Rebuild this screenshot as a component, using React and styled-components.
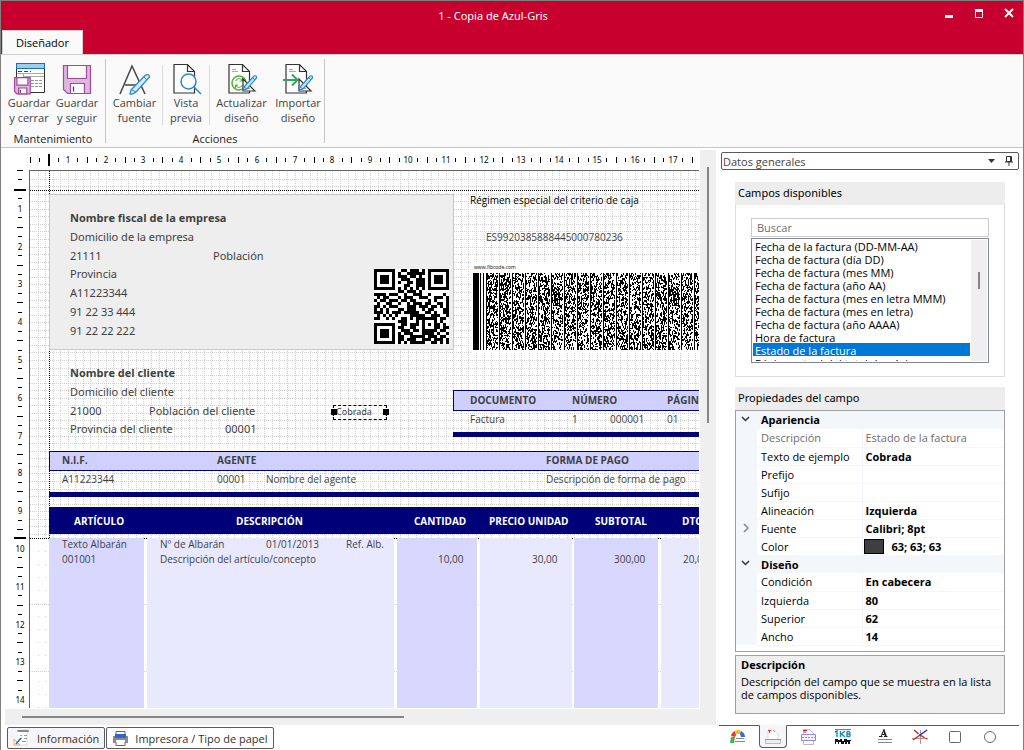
import React, { useLayoutEffect, useRef, useState } from "react";
import styled, { createGlobalStyle, css } from "styled-components";

const GlobalStyle = createGlobalStyle`
  * { box-sizing: border-box; }
  body { margin: 0; background: #fff; }
  body, button, input, select { font-family: "Open Sans", "Noto Sans", sans-serif; font-size: 11px; }
`;

/* ---------- window ---------- */
const Window = styled.div`
  display: flex;
  flex-direction: column;
  height: 100vh;
  min-height: 720px;
  border: 1px solid #808080;
  border-bottom: 0;
  color: #000;
`;
const Header = styled.header`
  display: flex;
  flex-direction: column;
  justify-content: space-between;
  height: 53px;
  flex: none;
  background: #c8002d;
`;
const TitleBar = styled.div`
  display: grid;
  grid-template-columns: 82px 1fr 82px;
  align-items: center;
  height: 29px;
`;
const Title = styled.h1`
  grid-column: 2;
  margin: 0;
  padding-right: 38px;
  text-align: center;
  font-family: "Noto Sans", sans-serif;
  font-size: 11px;
  font-weight: 400;
  color: #fff;
`;
const WindowButtons = styled.div`
  display: flex;
  justify-content: space-between;
  padding-right: 8px;
  padding-bottom: 6px;
`;
const WindowButton = styled.button`
  width: 14px;
  height: 14px;
  padding: 0;
  border: 0;
  background: none;
  color: #fff;
  svg { display: block; }
`;
const RibbonTab = styled.button`
  align-self: flex-start;
  width: 81px;
  height: 24px;
  margin-left: 1px;
  padding: 0;
  border: 1px solid #d0d0d0;
  border-bottom: 0;
  background: #fafafa;
  color: #000;
`;

/* ---------- ribbon ---------- */
const Ribbon = styled.div`
  display: flex;
  flex: none;
  height: 94px;
  background: #fafafa;
  border-top: 1px solid #d0d0d0;
  border-bottom: 1px solid #c6c6c6;
`;
const RibbonGroup = styled.section`
  display: flex;
  flex-direction: column;
  justify-content: space-between;
  margin: 4px 0 4px;
  padding: 0 ${(p) => p.$pad}px;
  border-right: 1px solid #c6c6c6;
`;
const RibbonRow = styled.div`
  display: flex;
`;
const GroupName = styled.div`
  text-align: center;
  line-height: 16px;
  margin-bottom: -4px;
  color: #222;
`;
const RibbonButton = styled.button`
  display: flex;
  flex-direction: column;
  align-items: center;
  width: ${(p) => p.$w}px;
  padding: 4px 0 0;
  border: 0;
  background: none;
  color: #444;
  line-height: 15px;
  white-space: pre-line;
  svg { display: block; flex: none; }
`;
const RibbonRule = styled.span`
  width: 1px;
  margin: 6px 0 0;
  height: 60px;
  background: #dcdcdc;
`;

/* ---------- body ---------- */
const Body = styled.main`
  display: flex;
  flex: 1;
  min-height: 0;
`;
const Designer = styled.section`
  display: flex;
  flex-direction: column;
  flex: 1;
  min-width: 0;
  padding-bottom: 1px;
`;
const Workspace = styled.div`
  display: grid;
  grid-template-columns: 28px minmax(0, 1fr) 17px;
  grid-template-rows: 22px minmax(0, 1fr);
  flex: 1;
  min-height: 0;
`;
const Ruler = styled.div`
  overflow: hidden;
  grid-area: ${(p) => (p.$vertical ? "2 / 1" : "1 / 2")};
  svg { display: block; }
  text { font-size: 8px; font-family: "Noto Sans", sans-serif; fill: #000; text-anchor: middle; }
`;
const Page = styled.div`
  grid-area: 2 / 2;
  position: relative;
  overflow: hidden;
  border-left: 1px solid #646464;
  border-top: 1px solid #646464;
`;
const PageGrid = styled.svg`
  position: absolute;
  left: 0;
  top: 0;
`;
const Track = styled.div`
  background: #efefef;
  ${(p) =>
    p.$vertical
      ? css`grid-area: 1 / 3 / 3 / 4; margin: 2px 0 -1px 1px; padding: 17px 7px 0;`
      : css`flex: none; height: 16px; margin: 1px 0 0 4px; padding: 7px 17px 0;`}
`;
const Thumb = styled.div`
  background: #868686;
  ${(p) => (p.$vertical ? css`width: 2px; height: ${p.$size};` : css`height: 2px; width: ${p.$size};`)}
`;
const BottomTabs = styled.nav`
  display: flex;
  flex: none;
  gap: 1px;
  margin: 2px 0 0 6px;
`;
const BottomTab = styled.button`
  display: flex;
  align-items: center;
  gap: 6px;
  height: 22px;
  padding: 0 5px;
  border: 1px solid #5a5a5f;
  border-radius: 2px;
  background: ${(p) => (p.$soft ? "#f5f5fa" : "#fff")};
  color: #333;
  white-space: nowrap;
`;

/* ---------- page items ---------- */
const Shape = styled.div`
  position: absolute;
  left: ${(p) => p.$x}px;
  top: ${(p) => p.$y}px;
  width: ${(p) => p.$w}px;
  height: ${(p) => p.$h}px;
  background: ${(p) => p.$fill};
  border: ${(p) => (p.$line ? `1px solid ${p.$line}` : "0")};
`;
const Field = styled.div`
  position: absolute;
  left: ${(p) => p.$x}px;
  top: ${(p) => p.$y}px;
  line-height: 16px;
  white-space: nowrap;
  font-family: ${(p) => (p.$noto ? `"Noto Sans"` : `"Open Sans"`)}, sans-serif;
  font-size: ${(p) => p.$size || 10}px;
  font-weight: ${(p) => (p.$bold ? 700 : 400)};
  color: ${(p) => p.$color || "#3f3f3f"};
`;
const Selected = styled.div`
  position: absolute;
  left: 303px;
  top: 234px;
  width: 54px;
  height: 15px;
  padding-left: 2px;
  border: 1px dashed #000;
  line-height: 12px;
  font-family: "Noto Sans", sans-serif;
  font-size: 9px;
  color: #3f3f3f;
`;
const Handle = styled.span`
  position: absolute;
  top: 3px;
  ${(p) => p.$side}: -3px;
  width: 6px;
  height: 6px;
  background: #000;
`;

/* ---------- side panel ---------- */
const Side = styled.aside`
  display: flex;
  flex-direction: column;
  flex: none;
  width: 307px;
  padding: 4px 4px 0 5px;
`;
const Combo = styled.div`
  display: flex;
  align-items: center;
  height: 18px;
  padding-right: 2px;
  border: 1px solid #5a5a5f;
  border-radius: 2px;
`;
const ComboSelect = styled.select`
  flex: 1;
  min-width: 0;
  height: 16px;
  padding: 0 1px;
  border: 0;
  appearance: none;
  background: none;
  color: #444;
`;
const ComboArrow = styled.svg`
  pointer-events: none;
  margin-right: 6px;
`;
const PinButton = styled.button`
  width: 14px;
  height: 14px;
  padding: 0;
  border: 0;
  background: none;
  svg { display: block; }
`;
const Group = styled.section`
  margin: ${(p) => p.$top}px 14px 0;
`;
const GroupTitle = styled.h2`
  margin: 0;
  height: 23px;
  padding-left: 3px;
  line-height: 22px;
  background: #ededed;
  font-family: "Noto Sans", sans-serif;
  font-size: 11px;
  font-weight: 400;
`;
const GroupBody = styled.div`
  border: 1px solid #dcdcdc;
  border-top: 0;
  padding: 13px 15px;
`;
const Search = styled.input`
  display: block;
  width: 100%;
  height: 19px;
  padding: 0 5px 1px;
  border: 1px solid #ccc;
  border-radius: 0;
  outline: 0;
  &::placeholder { color: #6d6d6d; }
`;
const ListFrame = styled.div`
  display: flex;
  height: 125px;
  margin-top: 1px;
  padding: 0 1px 1px;
  border: 1px solid #828790;
`;
const List = styled.select`
  flex: 1;
  min-width: 0;
  height: 122px;
  padding: 0;
  border: 0;
  outline: 0;
  overflow: hidden;
  scrollbar-width: none;
  background: #fff;
  color: #000;
  option {
    height: 13px;
    min-height: 13px;
    padding: 0 2px;
    line-height: 13px;
    border: 0;
  }
  option:checked {
    background: linear-gradient(#0078d7, #0078d7);
    -webkit-text-fill-color: #fff;
  }
`;
const ListTrack = styled.div`
  width: 16px;
  margin: 1px 0 0 1px;
  padding: 32px 7px 0;
  background: #efefef;
`;
const Properties = styled.div`
  height: 242px;
  border: 1px solid #a0a0a0;
`;
const PropTable = styled.table`
  width: 100%;
  border-collapse: collapse;
  table-layout: fixed;
  col.gutter { width: 21px; }
  col.name { width: 105px; }
  td, th { height: 18px; padding: 0; line-height: 15px; text-align: left; white-space: nowrap; vertical-align: top; }
`;
const Gutter = styled.td`
  background: #f3f6fb;
  svg { display: block; margin: 4px 0 0 4px; }
`;
const Category = styled.th`
  padding: 1px 0 0 4px !important;
  background: #f3f6fb;
  font-weight: 700;
`;
const PropName = styled.th`
  padding: 1px 0 0 4px !important;
  border-bottom: 1px solid #f3f6fb;
  font-weight: 400;
  color: ${(p) => (p.$muted ? "#6d6d6d" : "#000")};
`;
const PropValue = styled.td`
  padding: 1px 0 0 3px !important;
  border-bottom: 1px solid #f3f6fb;
  border-left: 1px solid #f3f6fb;
  font-weight: ${(p) => (p.$muted ? 400 : 700)};
  color: ${(p) => (p.$muted ? "#6d6d6d" : "#000")};
`;
const Swatch = styled.span`
  display: inline-block;
  width: 20px;
  height: 15px;
  margin: 0 8px 0 -2px;
  vertical-align: top;
  border: 1px solid #000;
  background: #3f3f3f;
`;
const Help = styled.div`
  height: 59px;
  margin: 3px 14px 0;
  padding: 2px 5px;
  border: 1px solid #a0a0a0;
  background: #efefef;
  line-height: 13px;
`;
const HelpTitle = styled.h3`
  margin: 0 0 4px;
  font-size: 11px;
  font-weight: 700;
`;
const ToolTabs = styled.nav`
  display: flex;
  margin: 11px 0 0 -2px;
  padding-left: 5px;
  border-top: 1px solid #5a5a5f;
`;
const ToolTab = styled.button`
  display: flex;
  align-items: center;
  justify-content: center;
  width: 28px;
  height: 23px;
  margin: -1px 7px 0 0;
  padding: 0;
  border: 1px solid ${(p) => (p.$active ? "#5a5a5f" : "transparent")};
  border-top-color: ${(p) => (p.$active ? "#f5f5fa" : "transparent")};
  border-radius: 0 0 4px 4px;
  background: ${(p) => (p.$active ? "#f5f5fa" : "none")};
  &:nth-child(4) { margin-right: 14px; }
`;

/* ---------- icons ---------- */
const Floppy = ({ x = 0, y = 0, s = 1 }) => (
  <g transform={`translate(${x} ${y}) scale(${s})`} stroke="#a04a9e" strokeWidth={1.2 / s}>
    <path d="M1 1H28V29H5L1 25Z" fill="#dcb8dc" />
    <path d="M5 1H24V14H5Z" fill="#fafafa" />
    <path d="M8 19H22V29H8Z" fill="#fafafa" />
    <path d="M11 22V27" stroke="#444" />
  </g>
);
const Pencil = ({ x, y }) => (
  <g transform={`translate(${x} ${y})`}>
    <path d="M2 12L12 1Q15 0 14.500 3L5 14L1 15Z" fill="#cfe6f7" stroke="#2e88cb" strokeWidth="1.200" />
    <path d="M2 12L5 14M11 3L13 5" stroke="#2e88cb" fill="none" />
  </g>
);
const Sheet = ({ x }) => (
  <path d={`M${x} 1.500H${x + 13.5}L${x + 20.5} 8.500V30H${x}ZM${x + 13.5} 1.500V8.500H${x + 20.5}`} fill="#fff" stroke="#333" strokeWidth="1.200" />
);
const SetSquare = () => <path d="M17 16V28H29ZM20 23V25H22.500Z" fill="#fff" stroke="#333" strokeWidth="1.200" />;
const Icon = ({ w = 32, h = 32, children }) => (
  <svg width={w} height={h} viewBox={`0 0 ${w} ${h}`} fill="none" aria-hidden="true">
    {children}
  </svg>
);

const SaveCloseIcon = () => (
  <Icon>
    <path d="M3.500 0.500H31.500V29.500H3.500Z" fill="#fff" stroke="#333" />
    <path d="M3.500 0.500H31.500V5.500H3.500Z" fill="#9ccdf0" stroke="#1c6fb5" />
    <path d="M5 8.500H18" stroke="#444" strokeDasharray="4 2" />
    <path d="M4 10.500H31M10.500 11V16M10 13.500H31" stroke="#a8a8a8" />
    <path d="M18 17.500H29M18 20.500H29M18 23.500H29" stroke="#999" strokeDasharray="3 1" />
    <Floppy x={1} y={14} s={0.58} />
  </Icon>
);
const SaveIcon = () => (
  <Icon>
    <Floppy x={1.500} y={1.500} />
  </Icon>
);
const FontIcon = () => (
  <Icon>
    <path d="M1 31L13 3L26 31M6 22H20" stroke="#444" strokeWidth="1.500" />
    <path d="M12 27L26 12.500Q30 10 30.500 14L17 29Q13 32 11 31Z" fill="#d6eaf8" stroke="#2e88cb" strokeWidth="1.300" />
    <path d="M13 27L17 29M25 14L28 17" stroke="#2e88cb" />
  </Icon>
);
const PreviewIcon = () => (
  <Icon>
    <Sheet x={4} />
    <circle cx="18.500" cy="18.500" r="7.500" fill="#fff" stroke="#2e88cb" strokeWidth="1.500" />
    <path d="M24 24L31 31" stroke="#2e88cb" strokeWidth="1.500" />
  </Icon>
);
const UpdateIcon = () => (
  <Icon>
    <Sheet x={3} />
    <path d="M6 6.500H10M6 8.500H12" stroke="#aaa" />
    <circle cx="13" cy="20" r="7" fill="#fff" stroke="#56b33c" strokeWidth="1.600" />
    <path d="M9.500 18Q13 13 16.500 18M16.500 15V18H13.500M16.500 22Q13 27 9.500 22M9.500 25V22H12" stroke="#56b33c" strokeWidth="1.200" />
    <SetSquare />
    <Pencil x={16} y={12} />
  </Icon>
);
const ImportIcon = () => (
  <Icon>
    <Sheet x={4} />
    <path d="M7 6.500H11M7 8.500H14" stroke="#aaa" />
    <path d="M1 17H15M10 11.500L15.500 17L10 22.500" stroke="#2fa560" strokeWidth="2" />
    <SetSquare />
    <Pencil x={16} y={12} />
  </Icon>
);
const InfoIcon = () => (
  <Icon w={18} h={18}>
    <path d="M5 3Q4 1 6 1H16V3Q14 2 14 5V16H4" fill="#fff" stroke="#ddd" />
    <path d="M4 1H15Q17 2 15 3H5Z" fill="#8a8a8a" />
    <path d="M7 6.500H9M11 6.500H14M7 9.500H9M11 9.500H14M9 12.500H13" stroke="#999" />
    <path d="M1 10V16H7Z" fill="#fff" stroke="#e8b04a" />
    <path d="M3 15L8 9" stroke="#2b6ca8" strokeWidth="1.500" />
  </Icon>
);
const PrinterIcon = () => (
  <Icon w={17} h={17}>
    <path d="M4 4V1.500H13V4M4 12V15.500H13V12" stroke="#666" fill="#fff" />
    <path d="M1 6H16V13H13V10H4V13H1Z" fill="#8a8a8a" />
    <path d="M3 4H14V8H3Z" fill="#2f66d0" />
  </Icon>
);
const DataIcon = () => (
  <Icon w={18} h={18}>
    <path d="M1 15L2 9H6L5 15Z" fill="#3db54a" />
    <path d="M2 8Q3 4 6 3L7 7L6 9Z" fill="#e53a2a" />
    <path d="M6 3Q9 1 12 3L11 6H7Z" fill="#f7b82a" />
    <path d="M12 3Q16 5 16 9H12L11 6Z" fill="#2f6fd0" />
    <path d="M7 10.500H15M6 13.500H16" stroke="#888" />
  </Icon>
);
const DocIcon = () => (
  <Icon w={18} h={18}>
    <path d="M4 11V2H10L14 6V11" fill="#fff" stroke="#ddd" />
    <path d="M4 2.500H7M5.500 3V5" stroke="#d33" />
    <path d="M9 2L11 4" stroke="#7ac" />
    <path d="M1.500 11.500H16.500V15.500H1.500Z" fill="#eee" stroke="#bbb" />
    <path d="M1 11.500H17" stroke="#5aa7dc" />
  </Icon>
);
const LinesIcon = () => (
  <Icon w={18} h={18}>
    <path d="M4.500 6V1.500H10L14.500 5V6M4.500 12V16.500H14.500V12" fill="#fff" stroke="#bbb" />
    <path d="M4 2.500H8M6 3V5" stroke="#c22" />
    <path d="M2.500 6.500H16.500V12.500H2.500Z" fill="#f4f2ff" stroke="#8f86f0" />
    <path d="M3 9.500H16" stroke="#8f86f0" strokeDasharray="2 1" />
  </Icon>
);
const CodeIcon = () => (
  <Icon w={18} h={18}>
    <path d="M1 1.500H17" stroke="#19a3c8" />
    <path d="M1 4L3 3V9M6.500 3V9M11 3L7.500 6L11 9M13 3.500V8.500H15.500Q17 7 15 6H13M13 3.500H15Q17 5 15 6" stroke="#1290b8" strokeWidth="1.400" />
    <path d="M1 11H4V12H6V11H8V13H10V11H13V12H17V13H16V16H14V14H13V16H11V14H10V16H7V14H5V16H4V14H2V16H1Z" fill="#111" />
  </Icon>
);
const TextIcon = () => (
  <Icon w={18} h={18}>
    <path d="M5 8.500L8 1.500M6 6.500H9.500M3 8.500H6.500M8 8.500H11.500" stroke="#222" />
    <path d="M7.500 1.500L10 8.500" stroke="#222" strokeWidth="1.800" />
    <path d="M2 11.500H16M2 14.500H16" stroke="#888" />
  </Icon>
);
const LineIcon = () => (
  <Icon w={18} h={18}>
    <path d="M1 10.500H17M9.500 2V16" stroke="#999" />
    <path d="M3 2L9 7L16 11" stroke="#d22" strokeWidth="1.400" strokeDasharray="6 1" />
    <path d="M16 2L9 7" stroke="#22c" strokeWidth="1.400" />
    <path d="M9 7L2 12" stroke="#d22" strokeWidth="1.400" />
  </Icon>
);
const RectIcon = () => (
  <Icon w={18} h={18}>
    <rect x="3.500" y="3.500" width="11" height="11" rx="1" stroke="#666" />
  </Icon>
);
const CircleIcon = () => (
  <Icon w={18} h={18}>
    <circle cx="9" cy="9" r="5.500" stroke="#666" />
  </Icon>
);

/* ---------- rulers, grid, codes ---------- */
const CM = 37.8;
const cm = (n) => Math.round(CM * n);

function RulerScale({ vertical, margins }) {
  const box = useRef(null);
  const [length, setLength] = useState(0);
  useLayoutEffect(() => {
    const el = box.current;
    const read = () => setLength(vertical ? el.clientHeight : el.clientWidth);
    read();
    const watch = new ResizeObserver(read);
    watch.observe(el);
    return () => watch.disconnect();
  }, [vertical]);

  const center = vertical ? 19 : 12;
  const marks = [];
  const bar = (key, at, len, thick) =>
    vertical ? (
      <rect key={key} x={center - len / 2} y={at} width={len} height={thick} />
    ) : (
      <rect key={key} x={at} y={center - len / 2} width={thick} height={len} />
    );
  for (let q = 0; cm(q / 4) < length - 5; q++) {
    const at = cm(q / 4) + (vertical ? 0 : 1);
    if (q % 4 === 0 && q > 0) {
      marks.push(
        <text key={q} x={vertical ? 19 : at} y={vertical ? at + 4 : 15}>
          {q / 4}
        </text>
      );
    } else if (!margins.some((m) => Math.abs(m - at) < 3)) {
      marks.push(bar(q, at, q % 2 ? 4 : 6, 1));
    }
  }
  margins.forEach((m) => m < length && marks.push(bar(`m${m}`, m - 1, 12, 2)));
  return (
    <Ruler ref={box} $vertical={vertical}>
      <svg width={vertical ? 28 : length} height={vertical ? length : 22} shapeRendering="crispEdges">
        {marks}
      </svg>
    </Ruler>
  );
}

const DETAIL_TOP = 367;
function GridLines() {
  const lines = [];
  for (let k = 1; k < 250; k++) {
    const p = Math.round(k * 7.56) + 0.5;
    lines.push(<path key={`v${k}`} d={`M${p} 0V${DETAIL_TOP}`} strokeDasharray="1 1" />);
    lines.push(<path key={`d${k}`} d={`M${p} ${DETAIL_TOP}V1500`} strokeDasharray="1 12" />);
    if (p < DETAIL_TOP) lines.push(<path key={`h${k}`} d={`M0 ${p}H1900`} strokeDasharray="1 1" />);
  }
  for (let y = 433; y < 1500; y += 67) lines.push(<path key={`r${y}`} d={`M0 ${y + 0.5}H1900`} strokeDasharray="1 1" />);
  return (
    <PageGrid width="1900" height="1500" fill="none" stroke="#d2d2d2" shapeRendering="crispEdges">
      {lines}
      <g stroke="#000" strokeDasharray="1 1">
        <path d="M19.500 0V368M0 19.500H1900M0 367.500H1900" />
      </g>
    </PageGrid>
  );
}

const QR = [
  "1111111001101110101111111",
  "1000001010011111101000001",
  "1011101011101101001011101",
  "1011101001110011101011101",
  "1011101010011011101011101",
  "1000001000110011101000001",
  "1111111010101010101111111",
  "0000000011011101000000000",
  "1111011100100111001000010",
  "0101100010111001110011101",
  "1011011101101100001010001",
  "0100110010010111011001101",
  "1101011100011101110110101",
  "1010100011011100101100011",
  "1110101110111110011010011",
  "0101010100001111100111001",
  "1100101001101011111110110",
  "0000000011100010100010100",
  "1111111001101110101011010",
  "1000001011001100100011011",
  "1011101001110110111110110",
  "1011101010111000111101001",
  "1011101011001111101110110",
  "1000001011011100111011101",
  "1111111010101111100110101",
];
function QrCode() {
  const d = QR.map((row, y) => [...row].map((c, x) => (c === "1" ? `M${x * 3} ${y * 3}h3v3h-3z` : "")).join("")).join("");
  return (
    <svg width="75" height="75" shapeRendering="crispEdges" role="img" aria-label="QR">
      <path d="M0 0H75V75H0Z" fill="#fff" />
      <path d={d} fill="#000" />
    </svg>
  );
}
function StackedCode() {
  let seed = 7;
  const rnd = () => (seed = (seed * 1103515245 + 12345) % 2147483648) / 2147483648;
  let d = "M2 11h6v77h-6zM9 11h1v77h-1zM12 11h1v77h-1z";
  for (let x = 15; x < 400; x++) {
    if ((x - 15) % 13 === 0) {
      d += `M${x} 11h1v77h-1z`;
      continue;
    }
    if ((x - 15) % 13 === 12) continue;
    let y = 11;
    while (y < 88) {
      const on = rnd() > 0.5;
      const h = Math.min(rnd() > 0.5 ? 2 : 1, 88 - y);
      if (on) d += `M${x} ${y}h1v${h}h-1z`;
      y += h;
    }
  }
  return (
    <svg width="400" height="91" shapeRendering="crispEdges" role="img" aria-label="Código">
      <path d="M0 0H400V91H0Z" fill="#fff" />
      <path d={d} fill="#000" />
    </svg>
  );
}

const NAVY = "#000078";
const LILAC = "#d0d0ff";
const SHAPES = [
  [19, 23, 405, 156, "#eee", "#c8c8c8"],
  [423, 219, 340, 21, LILAC, NAVY],
  [423, 261, 340, 5, NAVY],
  [19, 280, 744, 20, LILAC, NAVY],
  [19, 321, 744, 5, NAVY],
  [19, 336, 744, 27, NAVY],
  [19, 367, 95, 800, "#d8d8ff"],
  [117, 367, 247, 800, "#e8e8ff"],
  [367, 367, 80, 800, "#d8d8ff"],
  [450, 367, 92, 800, "#e8e8ff"],
  [544, 367, 84, 800, "#d8d8ff"],
  [631, 367, 84, 800, "#e8e8ff"],
];
const big = { $size: 11, $noto: true };
const bigBold = { $size: 11, $bold: true };
const bold = { $bold: true };
const head = { $bold: true, $color: "#fff" };
const FIELDS = [
  ["Nombre fiscal de la empresa", 40, 39, bigBold],
  ["Domicilio de la empresa", 40, 58, big],
  ["21111", 40, 77, big],
  ["Población", 183, 77, big],
  ["Provincia", 40, 95, big],
  ["A11223344", 40, 114, big],
  ["91 22 33 444", 40, 133, big],
  ["91 22 22 222", 40, 152, big],
  ["Régimen especial del criterio de caja", 440, 21, { $color: "#000" }],
  ["ES9920385888445000780236", 456, 58, {}],
  ["Nombre del cliente", 40, 194, bigBold],
  ["Domicilio del cliente", 40, 213, big],
  ["21000", 40, 232, big],
  ["Población del cliente", 119, 232, big],
  ["Provincia del cliente", 40, 250, big],
  ["00001", 195, 250, big],
  ["DOCUMENTO", 440, 221, bold],
  ["NÚMERO", 542, 221, bold],
  ["PÁGINA", 637, 221, bold],
  ["Factura", 440, 240, {}],
  ["1", 542, 240, {}],
  ["000001", 580, 240, {}],
  ["01", 637, 240, {}],
  ["N.I.F.", 32, 281, bold],
  ["AGENTE", 187, 281, bold],
  ["FORMA DE PAGO", 516, 281, bold],
  ["A11223344", 32, 300, {}],
  ["00001", 187, 300, {}],
  ["Nombre del agente", 236, 300, {}],
  ["Descripción de forma de pago", 516, 300, {}],
  ["ARTÍCULO", 44, 342, head],
  ["DESCRIPCIÓN", 206, 342, head],
  ["CANTIDAD", 384, 342, head],
  ["PRECIO UNIDAD", 459, 342, head],
  ["SUBTOTAL", 565, 342, head],
  ["DTO.", 652, 342, head],
  ["Texto Albarán", 32, 365, {}],
  ["Nº de Albarán", 130, 365, {}],
  ["01/01/2013", 236, 365, {}],
  ["Ref. Alb.", 316, 365, {}],
  ["001001", 32, 380, {}],
  ["Descripción del artículo/concepto", 130, 380, {}],
  ["10,00", 408, 380, {}],
  ["30,00", 502, 380, {}],
  ["300,00", 584, 380, {}],
  ["20,00", 653, 380, {}],
];

const OPTIONS = [
  "Fecha de la factura (DD-MM-AA)",
  "Fecha de factura (día DD)",
  "Fecha de factura (mes MM)",
  "Fecha de factura (año AA)",
  "Fecha de factura (mes en letra MMM)",
  "Fecha de factura (mes en letra)",
  "Fecha de factura (año AAAA)",
  "Hora de factura",
  "Estado de la factura",
  "Página actual del total de páginas",
];
const PROPS = [
  { cat: "Apariencia" },
  { name: "Descripción", value: "Estado de la factura", muted: true },
  { name: "Texto de ejemplo", value: "Cobrada" },
  { name: "Prefijo", value: "" },
  { name: "Sufijo", value: "" },
  { name: "Alineación", value: "Izquierda" },
  { name: "Fuente", value: "Calibri; 8pt", expand: true },
  { name: "Color", value: "63; 63; 63", swatch: true },
  { cat: "Diseño" },
  { name: "Condición", value: "En cabecera" },
  { name: "Izquierda", value: "80" },
  { name: "Superior", value: "62" },
  { name: "Ancho", value: "14" },
];
const TOOLS = [
  ["Datos", DataIcon],
  ["Documento", DocIcon],
  ["Líneas", LinesIcon],
  ["Códigos", CodeIcon],
  ["Texto", TextIcon],
  ["Línea", LineIcon],
  ["Rectángulo", RectIcon],
  ["Elipse", CircleIcon],
];

function RibbonItem({ icon: I, label, w }) {
  return (
    <RibbonButton type="button" $w={w}>
      <I />
      {label}
    </RibbonButton>
  );
}

export default function App() {
  return (
    <Window>
      <GlobalStyle />
      <Header>
        <TitleBar>
          <Title>1 - Copia de Azul-Gris</Title>
          <WindowButtons>
            <WindowButton type="button" aria-label="Minimizar">
              <Icon w={14} h={14}><path d="M4 9H12V12H4Z" fill="#fff" /></Icon>
            </WindowButton>
            <WindowButton type="button" aria-label="Maximizar">
              <Icon w={14} h={14}><path d="M4.500 4V11.500H11.500V4" stroke="#fff" /><path d="M4 3H12V6H4Z" fill="#fff" /></Icon>
            </WindowButton>
            <WindowButton type="button" aria-label="Cerrar">
              <Icon w={14} h={14}><path d="M4 3L12 11M12 3L4 11" stroke="#fff" strokeWidth="2" /></Icon>
            </WindowButton>
          </WindowButtons>
        </TitleBar>
        <RibbonTab type="button">Diseñador</RibbonTab>
      </Header>
      <Ribbon>
        <RibbonGroup $pad={4}>
          <RibbonRow>
            <RibbonItem icon={SaveCloseIcon} label={"Guardar\ny cerrar"} w={48} />
            <RibbonItem icon={SaveIcon} label={"Guardar\ny seguir"} w={48} />
          </RibbonRow>
          <GroupName>Mantenimiento</GroupName>
        </RibbonGroup>
        <RibbonGroup $pad={1}>
          <RibbonRow>
            <RibbonItem icon={FontIcon} label={"Cambiar\nfuente"} w={55} />
            <RibbonRule />
            <RibbonItem icon={PreviewIcon} label={"Vista\nprevia"} w={46} />
            <RibbonRule />
            <RibbonItem icon={UpdateIcon} label={"Actualizar\ndiseño"} w={63} />
            <RibbonItem icon={ImportIcon} label={"Importar\ndiseño"} w={50} />
          </RibbonRow>
          <GroupName>Acciones</GroupName>
        </RibbonGroup>
      </Ribbon>
      <Body>
        <Designer>
          <Workspace>
            <RulerScale margins={[20]} />
            <RulerScale vertical margins={[20, 368]} />
            <Page>
              <GridLines />
              {SHAPES.map(([x, y, w, h, fill, line], i) => (
                <Shape key={i} $x={x} $y={y} $w={w} $h={h} $fill={fill} $line={line} />
              ))}
              <Shape $x={344} $y={98} $w={75} $h={75}><QrCode /></Shape>
              <Shape $x={441} $y={91} $w={400} $h={91}><StackedCode /></Shape>
              <Field $x={444} $y={88} $size={5} $color="#000">www.fibcode.com</Field>
              {FIELDS.map(([text, x, y, look], i) => (
                <Field key={i} $x={x} $y={y} {...look}>{text}</Field>
              ))}
              <Selected>Cobrada<Handle $side="left" /><Handle $side="right" /></Selected>
            </Page>
            <Track $vertical><Thumb $vertical $size="256px" /></Track>
          </Workspace>
          <Track><Thumb $size="382px" /></Track>
          <BottomTabs>
            <BottomTab type="button" $soft><InfoIcon />Información</BottomTab>
            <BottomTab type="button"><PrinterIcon />Impresora / Tipo de papel</BottomTab>
          </BottomTabs>
        </Designer>
        <Side>
          <Combo>
            <ComboSelect aria-label="Sección"><option>Datos generales</option></ComboSelect>
            <ComboArrow width="9" height="6"><path d="M1 1H8L4.500 5Z" fill="#333" /></ComboArrow>
            <PinButton type="button" aria-label="Fijar panel">
              <Icon w={14} h={14}><path d="M4.500 2.500H9.500V7.500H4.500ZM8.500 2V8M3 8H11M7 8V12" stroke="#333" /></Icon>
            </PinButton>
          </Combo>
          <Group $top={12}>
            <GroupTitle>Campos disponibles</GroupTitle>
            <GroupBody>
              <Search type="text" placeholder="Buscar" aria-label="Buscar" />
              <ListFrame>
                <List size={9} defaultValue="Estado de la factura" aria-label="Campos disponibles">
                  {OPTIONS.map((o) => <option key={o}>{o}</option>)}
                </List>
                <ListTrack><Thumb $vertical $size="17px" /></ListTrack>
              </ListFrame>
            </GroupBody>
          </Group>
          <Group $top={10}>
            <GroupTitle>Propiedades del campo</GroupTitle>
            <Properties>
              <PropTable>
                <colgroup><col className="gutter" /><col className="name" /><col /></colgroup>
                <tbody>
                  {PROPS.map((p) =>
                    p.cat ? (
                      <tr key={p.cat}>
                        <Gutter><Icon w={11} h={8}><path d="M2 2L5.500 5.500L9 2" stroke="#333" strokeWidth="1.500" /></Icon></Gutter>
                        <Category colSpan={2} scope="colgroup">{p.cat}</Category>
                      </tr>
                    ) : (
                      <tr key={p.name}>
                        <Gutter>{p.expand && <Icon w={11} h={10}><path d="M4 1L8 5L4 9" stroke="#888" strokeWidth="1.500" /></Icon>}</Gutter>
                        <PropName scope="row" $muted={p.muted}>{p.name}</PropName>
                        <PropValue $muted={p.muted}>{p.swatch && <Swatch />}{p.value}</PropValue>
                      </tr>
                    )
                  )}
                </tbody>
              </PropTable>
            </Properties>
          </Group>
          <Help>
            <HelpTitle>Descripción</HelpTitle>
            Descripción del campo que se muestra en la lista de campos disponibles.
          </Help>
          <ToolTabs>
            {TOOLS.map(([name, I], i) => (
              <ToolTab key={name} type="button" aria-label={name} $active={i === 1}><I /></ToolTab>
            ))}
          </ToolTabs>
        </Side>
      </Body>
    </Window>
  );
}
